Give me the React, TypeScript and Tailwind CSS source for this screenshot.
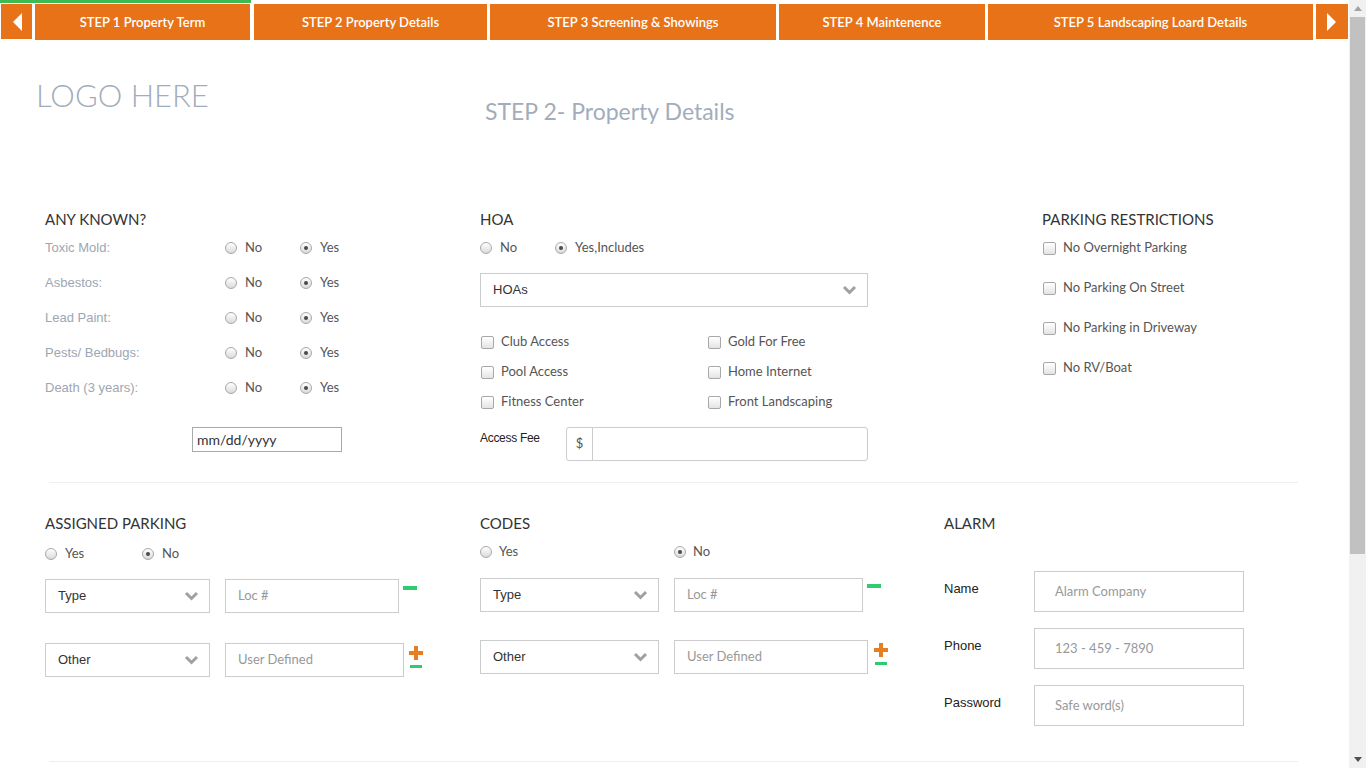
import React from "react";

const SS = { fontFamily: "Lato, 'Open Sans', sans-serif" } as React.CSSProperties;
const AR = { fontFamily: "'Liberation Sans', Arial, sans-serif" } as React.CSSProperties;

function Radio({ checked = false }: { checked?: boolean }) {
  return (
    <span className="w-[12px] h-[12px] shrink-0 rounded-full border border-[#a8a8a8] bg-linear-to-b from-[#ffffff] to-[#dadada] flex items-center justify-center">
      {checked && <span className="w-[4px] h-[4px] rounded-full bg-[#4a4a4a]" />}
    </span>
  );
}

function Check() {
  return (
    <span className="w-[13px] h-[13px] shrink-0 rounded-[2px] border border-[#a8a8a8] bg-linear-to-b from-[#ffffff] to-[#e4e4e4]" />
  );
}

function Chevron() {
  return (
    <svg width="15" height="10" viewBox="0 0 15 10">
      <polyline points="2,2 7.5,7.5 13,2" fill="none" stroke="#a0a0a0" strokeWidth="3" />
    </svg>
  );
}

function Select({ label, w }: { label: string; w: string }) {
  return (
    <div className={`${w} h-[34px] border border-[#cccccc] flex items-center justify-between pl-[12px] pr-[10px] text-[13px] text-[#333]`} style={AR}>
      <span>{label}</span>
      <Chevron />
    </div>
  );
}

function Input({ ph, w, h = "h-[34px]", pl = "pl-[12px]" }: { ph: string; w: string; h?: string; pl?: string }) {
  return (
    <div className={`${w} ${h} border border-[#cccccc] flex items-center ${pl} text-[13px] text-[#999]`} style={SS}>
      {ph}
    </div>
  );
}

function Minus() {
  return <span className="block w-[14px] h-[4px] bg-[#2ecc71]" />;
}

function PlusMinus() {
  return (
    <div className="flex flex-col items-center pt-[3px]">
      <svg width="14" height="14" viewBox="0 0 14 14">
        <rect x="5" y="0" width="4" height="14" fill="#e67e22" />
        <rect x="0" y="5" width="14" height="4" fill="#e67e22" />
      </svg>
      <span className="block w-[12px] h-[3px] bg-[#2ecc71] mt-[5px]" />
    </div>
  );
}

function RadioPair({ labels, checkedIdx, groupW, textGap = "gap-[8px]" }: { labels: string[]; checkedIdx: number; groupW: string; textGap?: string }) {
  return (
    <div className="flex items-center h-[18px] text-[13px] text-[#555]" style={SS}>
      {labels.map((l, i) => (
        <div key={l} className={`flex items-center ${textGap} ${i === 0 ? groupW : ""}`}>
          <Radio checked={i === checkedIdx} />
          <span>{l}</span>
        </div>
      ))}
    </div>
  );
}

const tabs = [
  { t: "STEP 1 Property Term", w: "w-[215px]" },
  { t: "STEP 2 Property Details", w: "w-[233px]" },
  { t: "STEP 3 Screening & Showings", w: "w-[286px]" },
  { t: "STEP 4 Maintenence", w: "w-[206px]" },
  { t: "STEP 5 Landscaping Loard Details", w: "w-[325px]" },
];

function Heading({ children }: { children: React.ReactNode }) {
  return (
    <div className="h-[20px] leading-[20px] text-[15px] text-[#333] uppercase" style={SS}>
      {children}
    </div>
  );
}

function Scrollbar() {
  return (
    <div className="w-[17px] h-[768px] shrink-0 bg-[#f1f1f1] flex flex-col items-center">
      <div className="h-[17px] w-full flex items-center justify-center">
        <svg width="8" height="5" viewBox="0 0 8 5"><polygon points="0,5 8,5 4,0" fill="#a3a3a3" /></svg>
      </div>
      <div className="w-[15px] h-[537px] bg-[#c1c1c1]" />
      <div className="flex-1" />
      <div className="h-[17px] w-full flex items-center justify-center">
        <svg width="8" height="5" viewBox="0 0 8 5"><polygon points="0,0 8,0 4,5" fill="#505050" /></svg>
      </div>
    </div>
  );
}

export default function App() {
  const known = ["Toxic Mold:", "Asbestos:", "Lead Paint:", "Pests/ Bedbugs:", "Death (3 years):"];
  return (
    <div className="flex bg-white h-[768px] overflow-hidden">
      <div className="w-[1349px] shrink-0 min-h-[1050px] bg-white">
        {/* NAV */}
        <div className="relative h-[40px] pt-[4px] flex items-start">
          <div className="absolute top-0 left-0 w-[251px] h-[3px] bg-[#3cba54]" />
          <div className="ml-[1px] w-[31px] h-[35px] bg-[#e87217] flex items-center justify-center">
            <svg width="10" height="18" viewBox="0 0 10 18"><polygon points="10,0 10,18 1,9" fill="#fff" /></svg>
          </div>
          {tabs.map((tab, i) => (
            <div
              key={tab.t}
              className={`${tab.w} ${i === 1 ? "ml-[4px]" : "ml-[3px]"} h-[36px] pt-[1px] bg-[#e87217] flex items-center justify-center text-white text-[13px] font-semibold`}
              style={SS}
            >
              {tab.t}
            </div>
          ))}
          <div className="ml-[3px] w-[32px] h-[35px] bg-[#e87217] flex items-center justify-center">
            <svg width="10" height="18" viewBox="0 0 10 18"><polygon points="0,0 0,18 9,9" fill="#fff" /></svg>
          </div>
        </div>

        {/* HEADER */}
        <div className="flex">
          <div className="w-[485px] pl-[36px] pt-[35px] text-[31px] leading-[40px] font-light text-[#a2adbb]" style={SS}>
            LOGO HERE
          </div>
          <div className="pt-[56px] text-[23px] leading-[30px] text-[#a2adbb]" style={SS}>
            STEP 2- Property Details
          </div>
        </div>

        {/* SECTION 1 */}
        <div className="mt-[83px] pl-[45px] grid grid-cols-[435px_562px_1fr]">
          <div>
            <Heading>Any Known?</Heading>
            <div className="mt-[10px] flex flex-col gap-[17px]">
              {known.map((k) => (
                <div key={k} className="flex items-center h-[18px]">
                  <span className="w-[180px] text-[13px] text-[#9ea6b2]" style={AR}>{k}</span>
                  <RadioPair labels={["No", "Yes"]} checkedIdx={1} groupW="w-[75px]" />
                </div>
              ))}
            </div>
            <div className="mt-[30px] ml-[147px] w-[150px] h-[25px] border border-[#a9a9a9] flex items-center pl-[4px] text-[14px] text-[#333]" style={SS}>
              mm/dd/yyyy
            </div>
          </div>

          <div className="w-[388px]">
            <Heading>HOA</Heading>
            <div className="mt-[10px]">
              <RadioPair labels={["No", "Yes,Includes"]} checkedIdx={1} groupW="w-[75px]" />
            </div>
            <div className="mt-[16px]">
              <Select label="HOAs" w="w-[388px]" />
            </div>
            <div className="mt-[20px] grid grid-cols-[227px_1fr] text-[13px] text-[#555]" style={SS}>
              {["Club Access", "Gold For Free", "Pool Access", "Home Internet", "Fitness Center", "Front Landscaping"].map((c) => (
                <div key={c} className="h-[30px] flex items-center gap-[7px] pl-[1px]">
                  <Check />
                  <span>{c}</span>
                </div>
              ))}
            </div>
            <div className="mt-[10px] flex items-start">
              <span className="w-[86px] pt-[2px] text-[12px] text-[#222] tracking-[-0.3px]" style={AR}>Access Fee</span>
              <div className="flex-1 h-[34px] border border-[#cccccc] rounded-[3px] flex">
                <div className="w-[26px] border-r border-[#cccccc] flex items-center justify-center text-[13px] text-[#555]" style={SS}>$</div>
                <div className="flex-1" />
              </div>
            </div>
          </div>

          <div>
            <Heading>Parking Restrictions</Heading>
            <div className="mt-[10px] flex flex-col gap-[22px] text-[13px] text-[#555]" style={SS}>
              {["No Overnight Parking", "No Parking On Street", "No Parking in Driveway", "No RV/Boat"].map((c) => (
                <div key={c} className="h-[18px] flex items-center gap-[7px] pl-[1px]">
                  <Check />
                  <span>{c}</span>
                </div>
              ))}
            </div>
          </div>
        </div>

        <div className="mt-[21px] ml-[49px] w-[1249px] h-px bg-[#eeeeee]" />

        {/* SECTION 2 */}
        <div className="mt-[30px] pl-[45px] grid grid-cols-[435px_464px_1fr]">
          <div>
            <Heading>Assigned Parking</Heading>
            <div className="mt-[12px]">
              <RadioPair labels={["Yes", "No"]} checkedIdx={1} groupW="w-[97px]" />
            </div>
            <div className="mt-[16px] flex items-start">
              <Select label="Type" w="w-[165px]" />
              <div className="ml-[15px]"><Input ph="Loc #" w="w-[174px]" /></div>
              <div className="ml-[4px] pt-[7px]"><Minus /></div>
            </div>
            <div className="mt-[30px] flex items-start">
              <Select label="Other" w="w-[165px]" />
              <div className="ml-[15px]"><Input ph="User Defined" w="w-[179px]" /></div>
              <div className="ml-[5px]"><PlusMinus /></div>
            </div>
          </div>

          <div>
            <Heading>Codes</Heading>
            <div className="mt-[10px]">
              <RadioPair labels={["Yes", "No"]} checkedIdx={1} groupW="w-[194px]" textGap="gap-[7px]" />
            </div>
            <div className="mt-[17px] flex items-start">
              <Select label="Type" w="w-[179px]" />
              <div className="ml-[15px]"><Input ph="Loc #" w="w-[189px]" /></div>
              <div className="ml-[4px] pt-[6px]"><Minus /></div>
            </div>
            <div className="mt-[28px] flex items-start">
              <Select label="Other" w="w-[179px]" />
              <div className="ml-[15px]"><Input ph="User Defined" w="w-[194px]" /></div>
              <div className="ml-[6px]"><PlusMinus /></div>
            </div>
          </div>

          <div>
            <Heading>Alarm</Heading>
            <div className="mt-[38px] flex flex-col gap-[16px]">
              {[
                ["Name", "Alarm Company"],
                ["Phone", "123 - 459 - 7890"],
                ["Password", "Safe word(s)"],
              ].map(([l, p]) => (
                <div key={l} className="flex items-start">
                  <span className="w-[90px] pt-[8px] text-[13px] text-[#222]" style={AR}>{l}</span>
                  <Input ph={p} w="w-[210px]" h="h-[41px]" pl="pl-[20px]" />
                </div>
              ))}
            </div>
          </div>
        </div>

        <div className="mt-[35px] ml-[49px] w-[1249px] h-px bg-[#eeeeee]" />
        <div className="h-[287px]" />
      </div>
      <Scrollbar />
    </div>
  );
}
